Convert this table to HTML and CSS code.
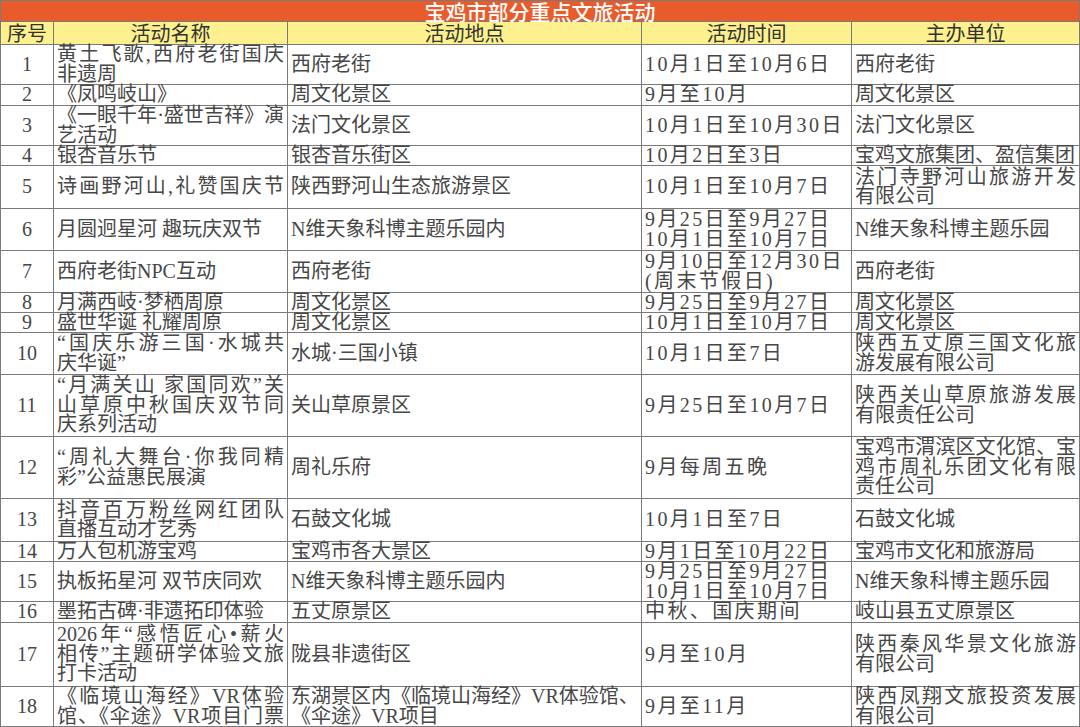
FILE: index.html
```html
<!DOCTYPE html>
<html lang="zh-CN">
<head>
<meta charset="utf-8">
<title>宝鸡市部分重点文旅活动</title>
<link rel="stylesheet" href="styles.css">
</head>
<body>
<div class="sheet">
  <div class="title">宝鸡市部分重点文旅活动</div>

  <div class="hd">序号</div>
  <div class="hd">活动名称</div>
  <div class="hd">活动地点</div>
  <div class="hd">活动时间</div>
  <div class="hd">主办单位</div>

  <div class="c num">1</div>
  <div class="c"><span class="sp">黄土飞歌,西府老街国庆</span><span>非遗周</span></div>
  <div class="c">西府老街</div>
  <div class="c dt">10月1日至10月6日</div>
  <div class="c">西府老街</div>

  <div class="c num">2</div>
  <div class="c">《凤鸣岐山》</div>
  <div class="c">周文化景区</div>
  <div class="c dt">9月至10月</div>
  <div class="c">周文化景区</div>

  <div class="c num">3</div>
  <div class="c"><span class="sp">《一眼千年·盛世吉祥》演</span><span>艺活动</span></div>
  <div class="c">法门文化景区</div>
  <div class="c dt">10月1日至10月30日</div>
  <div class="c">法门文化景区</div>

  <div class="c num">4</div>
  <div class="c">银杏音乐节</div>
  <div class="c">银杏音乐街区</div>
  <div class="c dt">10月2日至3日</div>
  <div class="c">宝鸡文旅集团、盈信集团</div>

  <div class="c num">5</div>
  <div class="c"><span class="sp">诗画野河山,礼赞国庆节</span></div>
  <div class="c">陕西野河山生态旅游景区</div>
  <div class="c dt">10月1日至10月7日</div>
  <div class="c"><span class="sp">法门寺野河山旅游开发</span><span>有限公司</span></div>

  <div class="c num">6</div>
  <div class="c">月圆迥星河 趣玩庆双节</div>
  <div class="c">N维天象科博主题乐园内</div>
  <div class="c dt"><span>9月25日至9月27日</span><span>10月1日至10月7日</span></div>
  <div class="c">N维天象科博主题乐园</div>

  <div class="c num">7</div>
  <div class="c">西府老街NPC互动</div>
  <div class="c">西府老街</div>
  <div class="c dt"><span>9月10日至12月30日</span><span>(周末节假日)</span></div>
  <div class="c">西府老街</div>

  <div class="c num">8</div>
  <div class="c">月满西岐·梦栖周原</div>
  <div class="c">周文化景区</div>
  <div class="c dt">9月25日至9月27日</div>
  <div class="c">周文化景区</div>

  <div class="c num">9</div>
  <div class="c">盛世华诞 礼耀周原</div>
  <div class="c">周文化景区</div>
  <div class="c dt">10月1日至10月7日</div>
  <div class="c">周文化景区</div>

  <div class="c num">10</div>
  <div class="c"><span class="sp">“国庆乐游三国·水城共</span><span>庆华诞”</span></div>
  <div class="c">水城·三国小镇</div>
  <div class="c dt">10月1日至7日</div>
  <div class="c"><span class="sp">陕西五丈原三国文化旅</span><span>游发展有限公司</span></div>

  <div class="c num">11</div>
  <div class="c"><span class="sp">“月满关山 家国同欢”关</span><span class="sp">山草原中秋国庆双节同</span><span>庆系列活动</span></div>
  <div class="c">关山草原景区</div>
  <div class="c dt">9月25日至10月7日</div>
  <div class="c"><span class="sp">陕西关山草原旅游发展</span><span>有限责任公司</span></div>

  <div class="c num">12</div>
  <div class="c"><span class="sp">“周礼大舞台·你我同精</span><span>彩”公益惠民展演</span></div>
  <div class="c">周礼乐府</div>
  <div class="c dt">9月每周五晚</div>
  <div class="c"><span class="sp">宝鸡市渭滨区文化馆、宝</span><span class="sp">鸡市周礼乐团文化有限</span><span>责任公司</span></div>

  <div class="c num">13</div>
  <div class="c"><span class="sp">抖音百万粉丝网红团队</span><span>直播互动才艺秀</span></div>
  <div class="c">石鼓文化城</div>
  <div class="c dt">10月1日至7日</div>
  <div class="c">石鼓文化城</div>

  <div class="c num">14</div>
  <div class="c">万人包机游宝鸡</div>
  <div class="c">宝鸡市各大景区</div>
  <div class="c dt">9月1日至10月22日</div>
  <div class="c">宝鸡市文化和旅游局</div>

  <div class="c num">15</div>
  <div class="c">执板拓星河 双节庆同欢</div>
  <div class="c">N维天象科博主题乐园内</div>
  <div class="c dt"><span>9月25日至9月27日</span><span>10月1日至10月7日</span></div>
  <div class="c">N维天象科博主题乐园</div>

  <div class="c num">16</div>
  <div class="c">墨拓古碑·非遗拓印体验</div>
  <div class="c">五丈原景区</div>
  <div class="c dt">中秋、国庆期间</div>
  <div class="c">岐山县五丈原景区</div>

  <div class="c num">17</div>
  <div class="c"><span class="sp">2026年“感悟匠心•薪火</span><span class="sp">相传”主题研学体验文旅</span><span>打卡活动</span></div>
  <div class="c">陇县非遗街区</div>
  <div class="c dt">9月至10月</div>
  <div class="c"><span class="sp">陕西秦风华景文化旅游</span><span>有限公司</span></div>

  <div class="c num">18</div>
  <div class="c"><span class="sp">《临境山海经》VR体验</span><span class="sp">馆、《伞途》VR项目门票</span></div>
  <div class="c"><span class="sp">东湖景区内《临境山海经》VR体验馆、</span><span>《伞途》VR项目</span></div>
  <div class="c dt">9月至11月</div>
  <div class="c"><span class="sp">陕西凤翔文旅投资发展</span><span>有限公司</span></div>
</div>
</body>
</html>
```
FILE: styles.css
```css
html, body {
  margin: 0;
  padding: 0;
  background: #ffffff;
}

.sheet {
  box-sizing: border-box;
  width: 1080px;
  display: grid;
  grid-template-columns: 52px 233px 353px 209px 227px;
  grid-template-rows: 20px 22px 39px 20px 39px 19px 42px 41px 41px 19px 19px 41px 61px 61px 42px 19px 39px 20px 63px 39px;
  gap: 1px;
  padding: 1px;
  background: #7a7a7a;
  font-family: "Liberation Serif", "Noto Sans CJK SC", serif;
  font-size: 20px;
  line-height: 19.5px;
  color: #474747;
}

.title {
  grid-column: 1 / -1;
  background: #e95b2b;
  color: #ffffff;
  text-align: center;
  font-family: "Noto Sans CJK SC", sans-serif;
  font-weight: 500;
  font-size: 21px;
  line-height: 20px;
}

.hd {
  background: #fdf08e;
  color: #333333;
  text-align: center;
  font-family: "Noto Sans CJK SC", sans-serif;
  font-size: 20px;
  line-height: 22px;
}

.c {
  background: #ffffff;
  display: flex;
  flex-direction: column;
  justify-content: center;
  padding: 0 3px;
  white-space: nowrap;
}

.num {
  align-items: center;
  padding: 0;
}

.sp {
  text-align: justify;
  text-align-last: justify;
}

.dt {
  letter-spacing: 2.4px;
}
```
